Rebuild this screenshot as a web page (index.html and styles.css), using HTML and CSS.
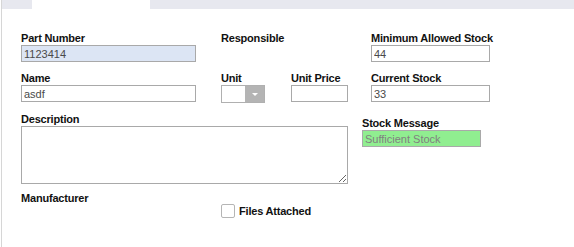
FILE: index.html
```html
<!DOCTYPE html>
<html lang="en">
    <head>
        <title>Part Details</title>
        <meta charset="UTF-8">
        <link rel="stylesheet" href="styles.css">
    </head>
    <body>
        <div class="page">
            <div class="tabs">
                <span class="tab"></span>
                <span class="tab active"></span>
                <span class="tab rest"></span>
            </div>

            <form class="part-form">
                <div class="field">
                    <label>Part Number</label>
                    <input class="box wide readonly" type="text" value="1123414" readonly>
                </div>
                <div class="field span-2">
                    <label>Responsible</label>
                </div>
                <div class="field">
                    <label>Minimum Allowed Stock</label>
                    <input class="box medium" type="text" value="44">
                </div>

                <div class="field">
                    <label>Name</label>
                    <input class="box wide" type="text" value="asdf">
                </div>
                <div class="field">
                    <label>Unit</label>
                    <div class="select">
                        <span class="select-value"></span>
                        <span class="select-arrow"></span>
                    </div>
                </div>
                <div class="field">
                    <label>Unit Price</label>
                    <input class="box small" type="text" value="">
                </div>
                <div class="field">
                    <label>Current Stock</label>
                    <input class="box medium" type="text" value="33">
                </div>

                <div class="field span-3">
                    <label>Description</label>
                    <textarea class="box description"></textarea>
                </div>
                <div class="field stock-message">
                    <label>Stock Message</label>
                    <input class="box medium ok" type="text" value="Sufficient Stock" readonly>
                </div>

                <div class="field last-row">
                    <label>Manufacturer</label>
                </div>
                <div class="field span-2 last-row files">
                    <input class="check" type="checkbox" id="files">
                    <label for="files">Files Attached</label>
                </div>
            </form>
        </div>
    </body>
</html>
```

FILE: styles.css
```css
body{
    margin: 0;
    font: 11px "Liberation Sans", Arial, Helvetica, sans-serif;
    color: #111;
    background: #fff;
}
.page{
    margin-left: 1px;
    border-left: 1px solid #d6d6d6;
    height: 247px;
    box-sizing: border-box;
}
.tabs{
    display: flex;
    height: 9px;
}
.tab{
    width: 30px;
    background: #e7e8ef;
}
.tab.active{
    width: 118px;
    background: #fff;
}
.tab.rest{
    flex: 1;
}
.part-form{
    display: grid;
    grid-template-columns: 200px 70px 80px 1fr;
    row-gap: 10px;
    padding: 23px 0 0 19px;
}
.field{
    display: flex;
    flex-direction: column;
    align-items: flex-start;
}
.span-2{
    grid-column: span 2;
}
.span-3{
    grid-column: span 3;
}
label{
    display: block;
    font-weight: bold;
    line-height: 13px;
    height: 13px;
    letter-spacing: -0.2px;
}
.box{
    box-sizing: border-box;
    height: 17px;
    margin: 0;
    padding: 0 2px;
    border: 1px solid #a9a9a9;
    border-radius: 0;
    font: 11px "Liberation Sans", Arial, Helvetica, sans-serif;
    color: #4a4a4a;
    background: #fff;
    outline: none;
}
.wide{
    width: 175px;
}
.medium{
    width: 119px;
}
.small{
    width: 57px;
}
.readonly{
    background: #dce5f4;
}
.description{
    width: 327px;
    height: 58px;
    resize: both;
}
.stock-message{
    margin: 4px 0 0 -9px;
}
.ok{
    background: #90ee90;
    color: #808080;
}
.select{
    display: flex;
    box-sizing: border-box;
    width: 44px;
    height: 18px;
    border: 1px solid #b0b0b0;
}
.select-value{
    flex: 1;
    background: #fff;
}
.select-arrow{
    display: flex;
    align-items: center;
    justify-content: center;
    width: 19px;
    background: #b4b4b4;
}
.select-arrow::after{
    content: "";
    border-left: 3px solid transparent;
    border-right: 3px solid transparent;
    border-top: 3px solid #fff;
}
.last-row{
    margin-top: -2px;
}
.files{
    flex-direction: row;
    align-items: center;
    padding-top: 12px;
}
.check{
    -webkit-appearance: none;
    appearance: none;
    box-sizing: border-box;
    width: 14px;
    height: 14px;
    margin: 0 4px 0 0;
    border: 1px solid #b5b5b5;
    border-radius: 2px;
    background: #fff;
}
.files label{
    font-weight: normal;
    font-weight: 600;
}
```
